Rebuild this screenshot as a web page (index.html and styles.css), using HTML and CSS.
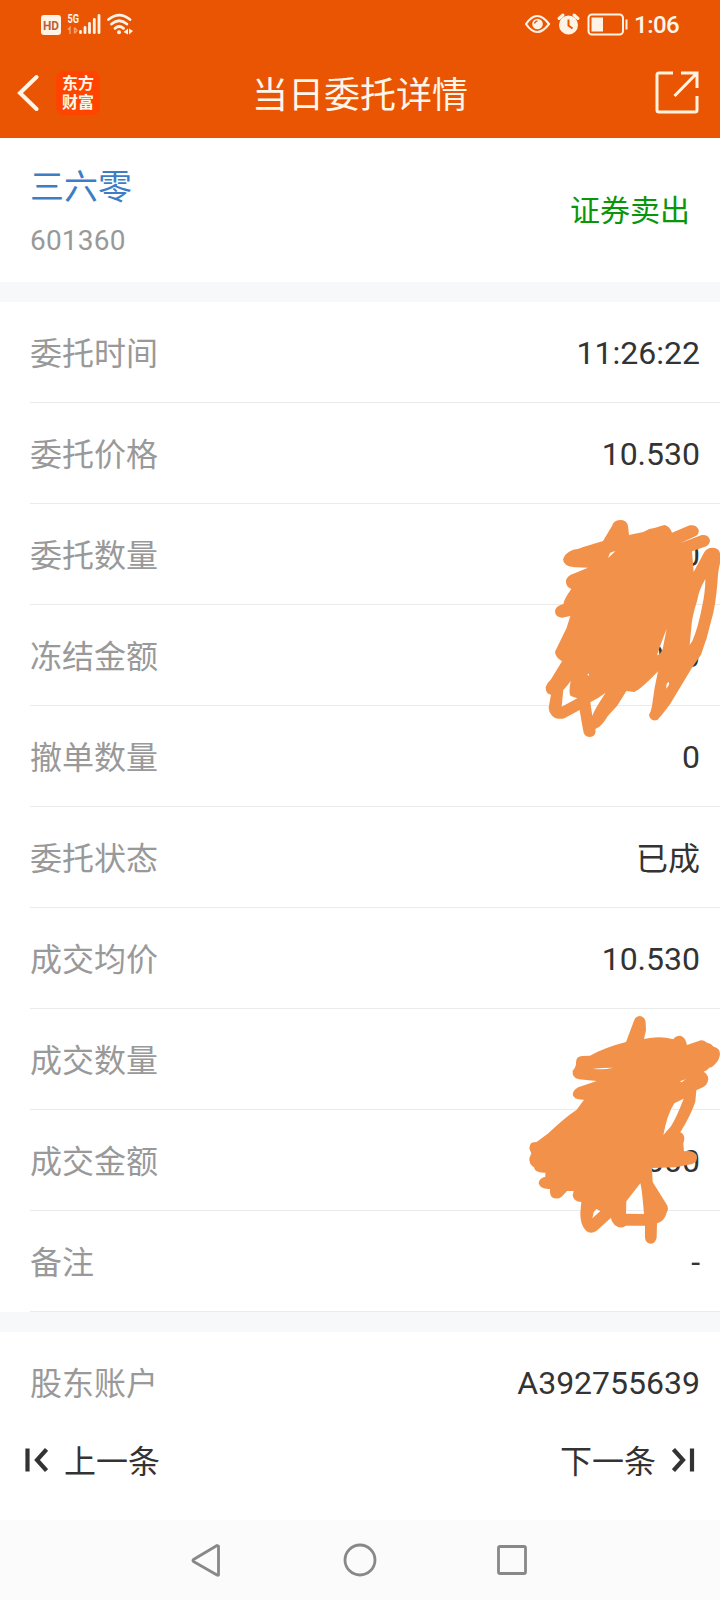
FILE: index.html
```html
<!DOCTYPE html>
<html lang="zh-CN">
<head>
    <meta charset="UTF-8">
    <meta name="viewport" content="width=device-width, initial-scale=1.0">
    <title>当日委托详情</title>
    <link rel="stylesheet" href="styles.css">
</head>
<body>
    <header class="header">
        <div class="status-bar">
            <svg class="status-left" width="100" height="32" viewBox="0 0 100 32">
                <rect x="5" y="7" width="20" height="20" rx="3" fill="#fff3e6"/>
                <text class="hd" x="15" y="21.5" text-anchor="middle" textLength="16" lengthAdjust="spacingAndGlyphs">HD</text>
                <text class="net" x="31.5" y="15" textLength="11.5" lengthAdjust="spacingAndGlyphs">5G</text>
                <path d="M32 21.500l2-2v6.500M38.500 19.500v6M39 20l2 2.500-2 2.500" fill="none" stroke="#f5a273" stroke-width="1.400"/>
                <path d="M44.500 23.500v1.200M49 19.500v5.200M53.500 15.500v9.200M58.300 11.500v13.200M63 7.500v17.200" stroke="#fff3e6" stroke-width="2.800" stroke-linecap="round"/>
                <path d="M72.500 11.500q10.800-8.800 21.500 0M75.500 16q7.700-6.500 15.400 0M79 20.300q4.200-3.500 8.500 0" fill="none" stroke="#fff3e6" stroke-width="2.800" stroke-linecap="round"/>
                <circle cx="83" cy="24.300" r="2" fill="#fff3e6"/>
                <path d="M92 20.500v6l-4.500-2.500zM93 20.500v6l4-3.500z" fill="#fff3e6"/>
            </svg>
            <div class="status-right">
                <svg width="110" height="32" viewBox="0 0 110 32">
                    <g fill="none" stroke="#fff3e6">
                        <path d="M6 16Q17 0 29 16Q17 32 6 16z" stroke-width="2.200" stroke-linejoin="round"/>
                        <rect x="68.500" y="6.500" width="34.500" height="20" rx="3.500" stroke-width="2"/>
                        <path d="M106.500 11.500v10" stroke-width="2"/>
                    </g>
                    <circle cx="17.500" cy="16" r="5.300" fill="#fff3e6"/>
                    <path d="M14.500 15.500q.5-2.500 3-2.700" fill="none" stroke="#ea5504" stroke-width="1.300"/>
                    <circle cx="48.500" cy="17" r="9.500" fill="#fff3e6"/>
                    <path d="M39 10.500l4-3.500M58 10.500l-4-3.500" stroke="#fff3e6" stroke-width="3" stroke-linecap="round"/>
                    <path d="M48.500 11.500v6l4 3" fill="none" stroke="#ea5504" stroke-width="2"/>
                    <rect x="71.500" y="9.500" width="11.500" height="14" fill="#fff3e6"/>
                </svg>
                <span class="time">1:06</span>
            </div>
        </div>
        <div class="title-bar">
            <div class="title-left">
                <svg width="22" height="38" viewBox="0 0 22 38">
                    <path d="M19.500 3L3 19l16.500 16" fill="none" stroke="#fff6ea" stroke-width="4" stroke-linecap="round"/>
                </svg>
                <div class="logo"><span>东方</span><span>财富</span></div>
            </div>
            <h1>当日委托详情</h1>
            <svg class="share" width="44" height="44" viewBox="0 0 44 44">
                <path d="M18 2H4Q2 2 2 4v35q0 2 2 2h36q2 0 2-2V25M26 2h16v15M42 2L19.500 25" fill="none" stroke="#fff3e0" stroke-width="3"/>
            </svg>
        </div>
    </header>

    <section class="summary">
        <div>
            <div class="stock-name">三六零</div>
            <div class="stock-code">601360</div>
        </div>
        <div class="side">证券卖出</div>
    </section>

    <section class="details">
        <div class="row"><span>委托时间</span><b>11:26:22</b></div>
        <div class="row"><span>委托价格</span><b>10.530</b></div>
        <div class="row"><span>委托数量</span><b>0</b></div>
        <div class="row"><span>冻结金额</span><b>.000</b></div>
        <div class="row"><span>撤单数量</span><b>0</b></div>
        <div class="row"><span>委托状态</span><b class="cn">已成</b></div>
        <div class="row"><span>成交均价</span><b>10.530</b></div>
        <div class="row"><span>成交数量</span><b>0</b></div>
        <div class="row"><span>成交金额</span><b>.000</b></div>
        <div class="row"><span>备注</span><b>-</b></div>

        <!-- marker strokes over the private amounts -->
        <svg class="scribble scribble-top" width="200" height="250" viewBox="0 0 600 750">
            <path fill-rule="evenodd" d="M249 123L276 78Q280 61 300 60Q321 60 324 77L327 105L370 96Q388 84 406 83Q420 78 434 75Q449 79 456 98L509 76Q529 73 536 89Q538 103 526 109L480 130L545 105Q566 103 570 121Q570 132 559 139L516 154L521 216L551 160Q558 143 578 143Q597 144 600 160L600 190Q593 220 593 240Q587 320 574 361Q562 415 543 464L516 503L450 613Q424 648 412 660Q391 666 387 645Q393 635 396 618Q402 565 414 514Q365 566 343 576L319 573Q301 603 291 618L264 647Q244 680 231 684Q224 686 227 694Q225 711 210 711Q196 711 191 698Q184 664 179 630L136 653Q122 660 104 653Q87 644 86 622L93 584Q76 582 77 561Q81 549 93 538L126 484Q105 470 105 455L140 383L151 348L126 353Q105 351 105 334Q106 318 130 312Q131 299 154 267Q136 260 138 240Q143 226 160 221L204 203L165 202Q129 199 129 178Q135 158 160 149Q176 148 190 141zM264 174L270 159Q278 154 286 154zM556 237Q536 272 532 300Q521 334 516 362L509 435L517 423Q534 384 546 321Q556 276 556 237zM440 386Q419 440 411 466Q423 462 428 447zM202 523l5-2v7zM130 570Q148 550 152 542Q145 580 152 588L172 595L125 620zM211 607Q233 596 257 578Q221 632 217 648zM439 566Q438 546 447 547Q449 555 439 566z"/>
        </svg>
        <svg class="scribble scribble-bottom" width="220" height="260" viewBox="0 0 660 780">
            <path fill-rule="evenodd" d="M378 126L402 62Q407 48 420 48Q435 50 437 67L438 91L432 117Q480 106 520 118Q527 106 541 107Q556 110 561 135L596 123Q607 117 621 128Q634 130 641 140Q660 144 660 162Q658 180 645 193Q638 202 628 203Q621 212 611 215Q625 224 625 238Q622 255 610 261L589 271L586 305Q574 342 541 397Q553 401 553 418L550 431L552 454Q579 449 590 465Q595 485 577 492L527 502L456 504L458 546L501 615Q507 627 500 638Q493 664 471 670L470 713Q466 731 451 731Q436 729 435 712V677H378Q363 687 350 679Q334 668 333 653L290 692Q272 704 258 692Q240 674 241 638L244 606Q221 606 218 586L221 573L201 573L185 590Q172 600 156 592Q149 586 150 567Q121 569 116 550Q116 535 136 530V518Q105 520 102 502Q87 494 88 475L94 460Q83 443 93 430Q100 426 110 426L145 400Q190 356 230 329L252 299Q218 300 218 282Q220 265 246 258L290 243L237 238Q215 233 218 212Q229 201 228 187Q229 168 247 168L270 167Q315 142 378 126zM279 206Q308 211 340 203Q307 203 279 206zM540 244L557 238L545 247zM551 296L523 310Q502 342 490 405L513 379Q529 353 551 296zM379 604L421 550Q425 560 432 642L378 641zM277 655L281 637L289 627L301 633z"/>
        </svg>
    </section>

    <section class="account">
        <div class="row"><span>股东账户</span><b>A392755639</b></div>
    </section>

    <footer class="pager">
        <div class="pager-item">
            <svg width="24" height="26" viewBox="0 0 24 26">
                <path d="M3.500 1.500v23M22.500 2.500L13 13l9.500 10.500" fill="none" stroke="#333" stroke-width="4.200"/>
            </svg>
            <span>上一条</span>
        </div>
        <div class="pager-item">
            <span>下一条</span>
            <svg width="24" height="26" viewBox="0 0 24 26">
                <path d="M20 1.500v23M1.500 2.500L11 13L1.500 23.500" fill="none" stroke="#333" stroke-width="4.200"/>
            </svg>
        </div>
    </footer>

    <nav class="nav-bar">
        <svg width="34" height="36" viewBox="0 0 34 36"><path d="M27.500 4v29Q27 33.500 26 33L2.500 19.500Q1.500 18.500 2.500 17.500L26 3.500z" fill="none" stroke="#888" stroke-width="2.800" stroke-linejoin="round"/></svg>
        <svg width="34" height="36" viewBox="0 0 34 36"><circle cx="17" cy="18" r="15" fill="none" stroke="#888" stroke-width="2.800"/></svg>
        <svg width="34" height="36" viewBox="0 0 34 36"><rect x="3.500" y="4.500" width="27" height="27" rx="1.500" fill="none" stroke="#888" stroke-width="2.800"/></svg>
    </nav>
</body>
</html>
```
FILE: styles.css
```css
* {
    box-sizing: border-box;
}
body {
    margin: 0;
    width: 720px;
    height: 1600px;
    overflow: hidden;
    display: flex;
    flex-direction: column;
    background-color: #fff;
    color: #333;
    font-family: Roboto, 'Noto Sans CJK SC', sans-serif;
}
svg {
    display: block;
    flex-shrink: 0;
}
.header {
    height: 138px;
    background-color: #ea5504;
    color: #fff6ea;
}
.status-bar {
    height: 48px;
    padding: 8px 0 0 36px;
    display: flex;
    justify-content: space-between;
}
.status-right {
    width: 200px;
    display: flex;
}
.hd {
    font-size: 13.5px;
    font-weight: 700;
    fill: #b8603a;
}
.net {
    font-size: 13px;
    font-weight: 700;
    fill: #fff3e6;
}
.time {
    margin-left: 4px;
    font-size: 24px;
    font-weight: 500;
    line-height: 35px;
    letter-spacing: -0.5px;
}
.title-bar {
    height: 90px;
    padding: 0 21px 0 17px;
    display: grid;
    grid-template-columns: 200px 1fr 196px;
    align-items: center;
}
.title-left {
    display: flex;
    align-items: center;
    gap: 17px;
}
.logo {
    width: 44px;
    height: 44px;
    padding-top: 2px;
    border-radius: 8px;
    background-color: #ff4400;
    font-family: 'Noto Sans CJK SC', sans-serif;
    font-size: 16px;
    font-weight: 700;
    line-height: 19px;
    text-align: center;
}
.logo span {
    display: block;
}
h1 {
    margin: 0 0 2px;
    font-size: 36px;
    font-weight: 400;
    text-align: center;
    white-space: nowrap;
}
.share {
    justify-self: end;
}
.summary {
    height: 144px;
    padding: 2px 30px 0;
    display: flex;
    justify-content: space-between;
    align-items: center;
}
.stock-name {
    font-size: 34px;
    line-height: 50px;
    color: #3c7dc4;
}
.stock-code {
    margin-top: 9px;
    font-size: 28px;
    line-height: 40px;
    letter-spacing: 0.2px;
    color: #999;
}
.side {
    padding-bottom: 6px;
    font-size: 30px;
    color: #0a960a;
}
.details {
    position: relative;
    border-top: 20px solid #f6f8fa;
}
.row {
    height: 101px;
    padding-right: 20px;
    margin-left: 30px;
    border-bottom: 1px solid #ebebeb;
    display: flex;
    justify-content: space-between;
    align-items: center;
    font-size: 32px;
}
.row span {
    padding-bottom: 3px;
    color: #999;
}
.row b {
    padding-top: 2px;
    font-weight: 400;
}
.row .cn {
    padding: 0 0 3px;
}
.scribble {
    position: absolute;
    fill: #f2924a;
}
.scribble-top {
    left: 520px;
    top: 198px;
}
.scribble-bottom {
    left: 500px;
    top: 698px;
}
.account {
    border-top: 20px solid #f6f8fa;
}
.account .row {
    height: 100px;
    border-bottom: none;
}
.pager {
    flex: 1;
    padding: 0 24px 32px;
    display: flex;
    justify-content: space-between;
    align-items: center;
    font-size: 32px;
}
.pager-item {
    display: flex;
    align-items: center;
    gap: 16px;
}
.pager-item span {
    padding-bottom: 3px;
}
.nav-bar {
    height: 80px;
    display: flex;
    justify-content: center;
    align-items: center;
    gap: 118px;
    background-color: #fbfbfb;
}
```
